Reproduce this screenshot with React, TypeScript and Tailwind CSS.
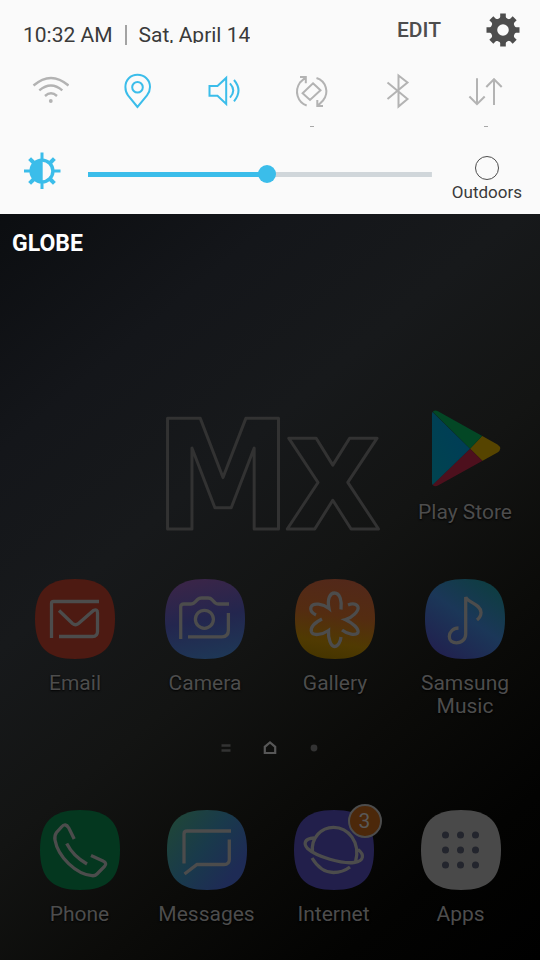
import { useState } from "react";
import type { ReactNode } from "react";

const SQUIRCLE = "M40 0C68 0 80 12 80 40S68 80 40 80 0 68 0 40 12 0 40 0Z";
const SPOKES = [0, 45, 90, 135, 180, 225, 270, 315];

function GearIcon() {
  return (
    <svg viewBox="-17 -17 34 34" className="block h-[34px] w-[34px]" aria-hidden="true">
      <g fill="#4d4d4d">
        {SPOKES.map((angle) => (
          <path key={angle} d="M-4.5 -10L-2.8 -13V-16.5H2.8V-13L4.5 -10Z" transform={`rotate(${angle})`} />
        ))}
      </g>
      <circle r="9" fill="none" stroke="#4d4d4d" strokeWidth="6.4" />
    </svg>
  );
}

function BrightnessIcon() {
  return (
    <svg viewBox="-18 -19 37 37" className="block h-[37px] w-[37px]" aria-hidden="true">
      <g stroke="#3bbdea" strokeWidth="3" fill="none">
        {SPOKES.map((angle) => (
          <path
            key={angle}
            strokeWidth={angle % 90 ? 4 : 3}
            d={angle % 90 ? "M0 -11V-17.5" : "M0 -11V-18.5"}
            transform={`rotate(${angle})`}
          />
        ))}
        <circle r="10.9" strokeWidth="3.4" />
      </g>
      <path d="M.7 -11.5V11.5A11.5 11.5 0 0 1 .7 -11.5Z" fill="#3bbdea" />
    </svg>
  );
}

type Toggle = { name: string; on: boolean; mark?: boolean; art: ReactNode };

const TOGGLES: Toggle[] = [
  {
    name: "Wi-Fi",
    on: false,
    art: (
      <>
        <path strokeWidth="2.4" d="M1.5 12.5Q19 -2.7 36.5 12.5M7.3 17.3Q19 7.5 30.3 17.3M13 23Q19 17.5 25 23" />
        <circle cx="18.8" cy="28" r="1.9" fill="currentColor" stroke="none" />
      </>
    ),
  },
  {
    name: "Location",
    on: true,
    art: (
      <>
        <path d="M18.5 34L9 22.3C7 19.8 6.4 17 6.4 14C6.4 7 11.5 1.8 18.5 1.8S31 7 31 14C31 17 30 19.8 28 22.3Z" />
        <circle cx="18.5" cy="14.3" r="5.3" />
      </>
    ),
  },
  {
    name: "Sound",
    on: true,
    art: (
      <path d="M3.5 13H11.5L20.2 4.9V31L11.5 22.7H3.5ZM24 10.3Q30.500 17.5 24 24.7M28 7Q37 17.5 28 28.3" />
    ),
  },
  {
    name: "Auto rotate",
    on: false,
    mark: true,
    art: (
      <path d="M20 10.3L27.500 17.2L17 27L9.600 20.2ZM13.700 32.500C4.500 29.500 1 18 7 9.500L12.500 4.500M7 4H12.800V10.2M23.500 5C33 8 36.500 19.500 30 27.500L25 32.500M24.300 27V33H30" />
    ),
  },
  {
    name: "Bluetooth",
    on: false,
    art: <path d="M7.500 9.500L27.500 26L18.500 33.500V2.500L27.500 9.500L7.500 26" />,
  },
  {
    name: "Mobile data",
    on: false,
    mark: true,
    art: <path d="M10 5.300V31M2.400 23.500L10 31.200L17.700 23.500M27 32V6M19.300 14L27 6.200L34.700 14" />,
  },
];

function PlayStoreIcon() {
  return (
    <svg viewBox="0 0 80 80" className="block h-20 w-20" aria-hidden="true">
      <defs>
        <clipPath id="play-shape">
          <path d="M7 6C7 3 10 1.500 13 3.200L72.500 36.500Q78 40.500 72.500 44.500L13 77.500C10 79 7 78 7 75Z" />
        </clipPath>
        <linearGradient id="play-blue" x1="1" y1="0" x2="0" y2="1">
          <stop offset="0" stopColor="#003b59" />
          <stop offset="1" stopColor="#00454e" />
        </linearGradient>
      </defs>
      <g clipPath="url(#play-shape)">
        <path d="M45 40.700L57 28L70 20H80V60H70L57.500 53Z" fill="#564400" />
        <path d="M0 -4H50L57.500 27.500L45 40.700Z" fill="#034725" />
        <path d="M0 84H50L58 53.500L45 40.700Z" fill="#4d101d" />
        <path d="M0 -4L7 3.500L45 40.700L7 77.500L0 84Z" fill="url(#play-blue)" />
      </g>
    </svg>
  );
}

function AppIcon({ fill, children }: { fill: string; children: ReactNode }) {
  return (
    <svg viewBox="0 0 80 80" className="block h-20 w-20" aria-hidden="true">
      <path d={SQUIRCLE} fill={fill} />
      <g fill="none" stroke="#4c4c4c" strokeWidth="3.3">
        {children}
      </g>
    </svg>
  );
}

function Gradients() {
  return (
    <svg className="absolute h-0 w-0" aria-hidden="true">
      <defs>
        <linearGradient id="camera" x1="0.400" y1="0" x2="0.600" y2="1">
          <stop offset="0" stopColor="#3a2548" />
          <stop offset="0.500" stopColor="#23264e" />
          <stop offset="1" stopColor="#1e3756" />
        </linearGradient>
        <linearGradient id="gallery" x1="0.600" y1="0" x2="0.450" y2="1">
          <stop offset="0" stopColor="#52281a" />
          <stop offset="0.450" stopColor="#542c11" />
          <stop offset="0.800" stopColor="#503a02" />
          <stop offset="1" stopColor="#463500" />
        </linearGradient>
        <linearGradient id="music" x1="0.900" y1="0" x2="0.200" y2="1">
          <stop offset="0" stopColor="#0c3e3e" />
          <stop offset="0.500" stopColor="#1b3758" />
          <stop offset="1" stopColor="#21204e" />
        </linearGradient>
        <linearGradient id="messages" x1="0.100" y1="0.100" x2="0.900" y2="0.700">
          <stop offset="0" stopColor="#1f4539" />
          <stop offset="0.500" stopColor="#193a4b" />
          <stop offset="1" stopColor="#1e2b55" />
        </linearGradient>
      </defs>
    </svg>
  );
}

function Shortcut({ name, children, badge }: { name: string; children: ReactNode; badge?: string }) {
  return (
    <button type="button" className="flex flex-col items-center justify-start gap-[13px]">
      <span className="relative block">
        {children}
        {badge && (
          <span className="absolute -top-1.5 -right-2 flex h-[34px] w-[34px] items-center justify-center rounded-full border-2 border-[#4c4c4c] bg-[#4c280a] text-[21px] leading-[23px] text-[#595959]">
            {badge}
          </span>
        )}
      </span>
      <span className="text-center text-[21px] leading-[23px] text-[#4d4d4d] [text-shadow:0_1px_2px_#000]">
        {name}
      </span>
    </button>
  );
}

function QuickPanel() {
  const [level, setLevel] = useState(133);
  const percent = (level / 255) * 100;
  return (
    <header className="bg-[#fafafa] text-[#3a3a3a]">
      <div className="flex items-start justify-between pr-5 pl-[23px] pt-[13px]">
        <div className="flex items-start pt-[10px] text-[21px] leading-6">
          <time className="h-5 overflow-hidden">10:32 AM</time>
          <span className="mx-3 mt-0.5 h-5 w-0.5 bg-[#a3a3a3]" />
          <time className="h-5 overflow-hidden">Sat, April 14</time>
        </div>
        <div className="flex items-start gap-[45px]">
          <button type="button" className="pt-[5px] text-[21px] leading-6 font-medium text-[#4d4d4d]">
            EDIT
          </button>
          <button type="button" aria-label="Settings">
            <GearIcon />
          </button>
        </div>
      </div>

      <div className="grid grid-cols-6 pt-[26px] pr-[11px] pl-[7px]">
        {TOGGLES.map((toggle) => (
          <button
            key={toggle.name}
            type="button"
            aria-label={toggle.name}
            aria-pressed={toggle.on}
            className={
              toggle.on
                ? "flex flex-col items-center text-[#3bbdea]"
                : "flex flex-col items-center text-[#b3b3b3]"
            }
          >
            <svg
              viewBox="0 0 37 36"
              className="block h-9 w-[37px]"
              fill="none"
              stroke="currentColor"
              strokeWidth="2"
              aria-hidden="true"
            >
              {toggle.art}
            </svg>
            {toggle.mark && <span className="mt-[17px] h-px w-1 bg-[#a8a8a8]" />}
          </button>
        ))}
      </div>

      <div className="flex items-start pt-[25px] pr-[18px] pb-3 pl-6">
        <BrightnessIcon />
        <input
          type="range"
          aria-label="Brightness"
          min={0}
          max={255}
          value={level}
          onChange={(event) => setLevel(Number(event.target.value))}
          style={{ backgroundImage: `linear-gradient(to right, #3bbdea ${percent}%, #d0d6da ${percent}%)` }}
          className="mr-5 ml-[27px] h-11 min-w-0 flex-1 appearance-none bg-[length:100%_5px] bg-center bg-no-repeat [&::-webkit-slider-thumb]:h-[18px] [&::-webkit-slider-thumb]:w-[18px] [&::-webkit-slider-thumb]:appearance-none [&::-webkit-slider-thumb]:rounded-full [&::-webkit-slider-thumb]:bg-[#3bbdea]"
        />
        <label className="flex flex-col items-center gap-0.5 pt-1 text-[17px] leading-5">
          <input type="checkbox" className="h-6 w-6 appearance-none rounded-full border border-[#4d4d4d]" />
          Outdoors
        </label>
      </div>
    </header>
  );
}

export default function App() {
  return (
    <div className="flex min-h-screen flex-col bg-[linear-gradient(140deg,#06070a_0%,#0b0d10_14%,#14161a_32%,#17191b_46%,#131413_60%,#0b0b09_74%,#030302_88%,#000_100%)] font-[Roboto,'Liberation_Sans',sans-serif]">
      <Gradients />
      <QuickPanel />
      <main className="flex flex-1 flex-col">
        <p className="px-3 pt-4 text-[23px] leading-7 font-bold text-white">GLOBE</p>

        <section className="mt-[150px] grid grid-cols-4 gap-y-[55px] px-[10px]">
          <svg
            viewBox="0 0 260 116"
            className="col-span-2 col-start-2 block h-[116px] w-full overflow-visible"
            fill="none"
            stroke="#323232"
            strokeWidth="3"
            strokeLinejoin="round"
            fontFamily="'DejaVu Sans Condensed', 'DejaVu Sans', sans-serif"
            fontWeight="700"
          >
            <text x="15" y="121" fontSize="152">
              M
            </text>
            <text x="145" y="121" fontSize="165">
              x
            </text>
          </svg>
          <Shortcut name="Play Store">
            <PlayStoreIcon />
          </Shortcut>
          <Shortcut name="Email">
            <AppIcon fill="#4d1a12">
              <path d="M16.500 59V24.500Q16.500 22.500 18.500 22.500H64M24 57.500H57.500Q62.500 57.500 62.500 52.500V34Q62.500 29.500 58.500 31.500L43.500 44.500Q40.500 47 37.500 44.500L24 31.500" />
            </AppIcon>
          </Shortcut>
          <Shortcut name="Camera">
            <AppIcon fill="url(#camera)">
              <path d="M15.700 60V28Q15.700 25 19 25H26Q28.500 25 30 23L32.500 20.500Q34 19 36.500 19H43Q45.500 19 47 20.700L50 23.700Q51.500 25 53.500 25H64M23 57.800H57Q63.400 57.800 63.400 51V34" />
              <circle cx="39.400" cy="40.300" r="9" />
            </AppIcon>
          </Shortcut>
          <Shortcut name="Gallery">
            <AppIcon fill="url(#gallery)">
              <path d="M46 30.500C47 22 45 14 39.500 14C35 14 32 20 34 29.500C28 25 18 23 16 28C15 31 17 34 21 36M27 40C20 43.500 15 48 16.500 53C18 57 27 56 33.500 51.500C33 60 36 67.500 39.500 67.500C43 67.500 45.500 63 46 58M53 26C58 24 62 25 63 28C64 32 57 39 50.500 40.700C58 44 64 50 63 53.500C61 57 52 55 47 51" />
            </AppIcon>
          </Shortcut>
          <Shortcut name="Samsung Music">
            <AppIcon fill="url(#music)">
              <path d="M33.500 49C28 49 24.300 53 24.300 57.500C24.300 61.500 27.500 63.800 31.500 63.800C37 63.800 40.700 60 40.700 55V18C43 24 56 25 56 33.500C56 36 54.500 39 52 41" />
            </AppIcon>
          </Shortcut>
        </section>

        <nav aria-label="Home pages" className="mt-[23px] flex h-[14px] items-center justify-center gap-8">
          <svg viewBox="0 0 12 14" className="h-[14px] w-3" stroke="#333" strokeWidth="2.400" aria-hidden="true">
            <path d="M1.500 4.500H10.500M1.500 9.500H10.500" />
          </svg>
          <svg viewBox="0 0 12 14" className="h-[14px] w-3 overflow-visible" fill="none" stroke="#575757" strokeWidth="2.200" aria-hidden="true">
            <path d="M.8 12V5.800L6 1.500L11.200 5.800V12Z" />
          </svg>
          <svg viewBox="0 0 12 14" className="h-[14px] w-3" fill="#333" aria-hidden="true">
            <circle cx="6" cy="7" r="3.400" />
          </svg>
        </nav>

        <section className="mt-[55px] grid grid-cols-4 px-4 pb-[34px]">
          <Shortcut name="Phone">
            <AppIcon fill="#04371f">
              <path d="M34.200 29L28.800 18Q25.500 12.500 21.500 17L16.500 22.500Q14.200 25.500 15 30C18 47 36 64 52 65.700Q55 66 57 64L64.500 56.500Q67.500 53 63 51L51 45.500M26.700 33.500Q33 46 47 54" />
            </AppIcon>
          </Shortcut>
          <Shortcut name="Messages">
            <AppIcon fill="url(#messages)">
              <path d="M17 53.500V24Q17 21 20 21H64M62.300 29.500V49.500Q62.300 54.500 57 54.500H30L17.500 64" />
            </AppIcon>
          </Shortcut>
          <Shortcut name="Internet" badge="3">
            <AppIcon fill="#221f4b">
              <path d="M20 28C10 28.500 9.500 34 13.500 38.500C23 47 48 54 60 52.500C71 51 70 44 64 39.500M18.500 41.500C17 28 27 17.300 39.500 17.300C54 17.300 67 32 61.500 52M18 48C24 58 31 62.500 39.500 62.500C46 62.500 52 60 56 57" />
            </AppIcon>
          </Shortcut>
          <Shortcut name="Apps">
            <AppIcon fill="#494949">
              {[25, 40, 55].map((cy) =>
                [24.5, 39.5, 54.5].map((cx) => (
                  <circle key={`${cx}-${cy}`} cx={cx} cy={cy} r="3.500" fill="#23252d" stroke="none" />
                )),
              )}
            </AppIcon>
          </Shortcut>
        </section>
      </main>
    </div>
  );
}
